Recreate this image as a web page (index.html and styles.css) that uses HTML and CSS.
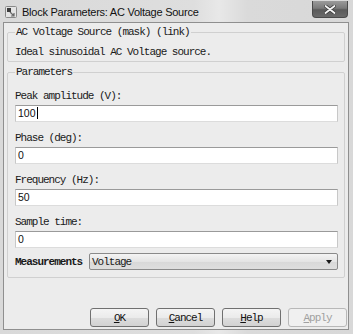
FILE: index.html
```html
<!DOCTYPE html>
<html lang="en">
<head>
    <meta charset="UTF-8">
    <meta name="viewport" content="width=device-width, initial-scale=1.0">
    <title>Block Parameters: AC Voltage Source</title>
    <link rel="stylesheet" href="styles.css">
</head>
<body>

    <div class="window">
        <div class="titlebar">
            <svg class="app-icon" width="12" height="12" viewBox="0 0 12 12">
                <rect x="0.5" y="0.5" width="11" height="11" rx="1" fill="#e4e4e4" stroke="#8a8a8a"/>
                <rect x="2" y="2" width="4" height="4" fill="#3c3c3c"/>
                <path d="M5 6 L9 10 M9 7 L9 10 L6 10" stroke="#6a6a6a" stroke-width="1.2" fill="none"/>
            </svg>
            <span class="title">Block Parameters: AC Voltage Source</span>
            <div class="close-btn">
                <svg width="12" height="9" viewBox="0 0 12 9">
                    <path d="M1.5 1 L10.5 8 M10.5 1 L1.5 8" stroke="#3a3a3a" stroke-width="3.4" stroke-linecap="round"/>
                    <path d="M1.5 1 L10.5 8 M10.5 1 L1.5 8" stroke="#f4f4f4" stroke-width="1.8" stroke-linecap="round"/>
                </svg>
            </div>
        </div>

        <div class="client">
            <fieldset class="group">
                <legend>AC Voltage Source (mask) (link)</legend>
                <p class="desc">Ideal sinusoidal AC Voltage source.</p>
            </fieldset>

            <fieldset class="group params">
                <legend>Parameters</legend>

                <div class="field">
                    <label>Peak amplitude (V):</label>
                    <div class="edit">100<span class="caret"></span></div>
                </div>
                <div class="field">
                    <label>Phase (deg):</label>
                    <div class="edit">0</div>
                </div>
                <div class="field">
                    <label>Frequency (Hz):</label>
                    <div class="edit">50</div>
                </div>
                <div class="field">
                    <label>Sample time:</label>
                    <div class="edit">0</div>
                </div>

                <div class="select-row">
                    <span class="select-label">Measurements</span>
                    <div class="select">
                        <span>Voltage</span>
                        <span class="arrow"></span>
                    </div>
                </div>
            </fieldset>

            <div class="buttons">
                <button class="btn"><u>O</u>K</button>
                <button class="btn"><u>C</u>ancel</button>
                <button class="btn"><u>H</u>elp</button>
                <button class="btn disabled"><u>A</u>pply</button>
            </div>
        </div>
    </div>

</body>
</html>
```

FILE: styles.css
```css
body {
    margin: 0;
    padding: 0;
    background: #d6d6d6;
    font-family: "Liberation Mono", monospace;
    color: #1a1a1a;
}
.window {
    width: 353px;
    height: 334px;
    box-sizing: border-box;
    padding: 0 4px 4px 3px;
    background: linear-gradient(90deg, #d9d9d9 0%, #dedede 55%, #e8e8e8 62%, #dadada 70%, #d8d8d8 100%);
    display: flex;
    flex-direction: column;
}
.titlebar {
    height: 22px;
    display: flex;
    align-items: center;
    padding-left: 2px;
}
.app-icon {
    margin-right: 5px;
    margin-top: 2px;
}
.title {
    font-family: "Liberation Sans", Arial, sans-serif;
    font-size: 11px;
    letter-spacing: -0.25px;
    color: #111;
    margin-top: 2px;
}
.close-btn {
    margin-left: auto;
    align-self: flex-start;
    margin-top: 1px;
    margin-right: 1px;
    width: 36px;
    height: 17px;
    box-sizing: border-box;
    border: 1px solid #4a4a4a;
    border-top: none;
    border-radius: 0 0 4px 4px;
    background: linear-gradient(#9a9a9a, #7a7a7a 45%, #5a5a5a 55%, #6a6a6a);
    display: flex;
    align-items: center;
    justify-content: center;
}
.client {
    flex: 1;
    border: 1px solid #8f8f8f;
    background: #ececec;
    padding-top: 2px;
    display: flex;
    flex-direction: column;
}
.group {
    margin: 0 3px;
    padding: 0 6px 2px 7px;
    border: 1px solid #d0d0d0;
    border-radius: 2px;
    min-width: 0;
}
legend {
    padding: 0 1px;
    font-size: 11px;
    line-height: 14px;
    letter-spacing: -1px;
}
.desc {
    margin: 6px 0 0 0;
    font-size: 11px;
    line-height: 14px;
    letter-spacing: -1px;
}
.params {
    margin-top: 3px;
    padding-top: 9px;
    padding-bottom: 7px;
}
.field {
    margin-bottom: 8px;
}
.field label {
    display: block;
    font-size: 11px;
    line-height: 17px;
    letter-spacing: -1px;
}
.edit {
    height: 17px;
    box-sizing: border-box;
    background: #fff;
    border: 1px solid;
    border-color: #9a9a9a #c8c8c8 #dcdcdc #c8c8c8;
    font-family: "Liberation Sans", Arial, sans-serif;
    font-size: 10.5px;
    line-height: 15px;
    padding-left: 2px;
    color: #111;
}
.caret {
    display: inline-block;
    width: 1px;
    height: 12px;
    background: #000;
    vertical-align: -2px;
    margin-left: 1px;
}
.select-row {
    display: flex;
    align-items: center;
    margin-top: -3px;
}
.select-label {
    width: 74px;
    font-size: 11px;
    letter-spacing: -1px;
    font-weight: bold;
}
.select {
    flex: 1;
    height: 17px;
    box-sizing: border-box;
    border: 1px solid #8a8a8a;
    border-radius: 2px;
    background: linear-gradient(#f4f4f4, #e4e4e4 50%, #d8d8d8 51%, #dedede);
    display: flex;
    align-items: center;
    padding-left: 2px;
    font-size: 11px;
    letter-spacing: -1px;
}
.arrow {
    margin-left: auto;
    margin-right: 5px;
    width: 0;
    height: 0;
    border-left: 3px solid transparent;
    border-right: 3px solid transparent;
    border-top: 4px solid #1a1a1a;
}
.buttons {
    display: flex;
    justify-content: flex-end;
    gap: 7px;
    margin-top: 30px;
    padding-right: 1px;
}
.btn {
    width: 59px;
    height: 19px;
    padding: 0;
    border: 1px solid #707070;
    border-radius: 3px;
    background: linear-gradient(#f4f4f4, #ebebeb 50%, #dddddd 51%, #d2d2d2);
    font-family: "Liberation Mono", monospace;
    font-size: 11px;
    letter-spacing: -1px;
    color: #111;
}
.btn.disabled {
    border-color: #b8b8b8;
    background: #f0f0f0;
    color: #a0a0a0;
}
```
